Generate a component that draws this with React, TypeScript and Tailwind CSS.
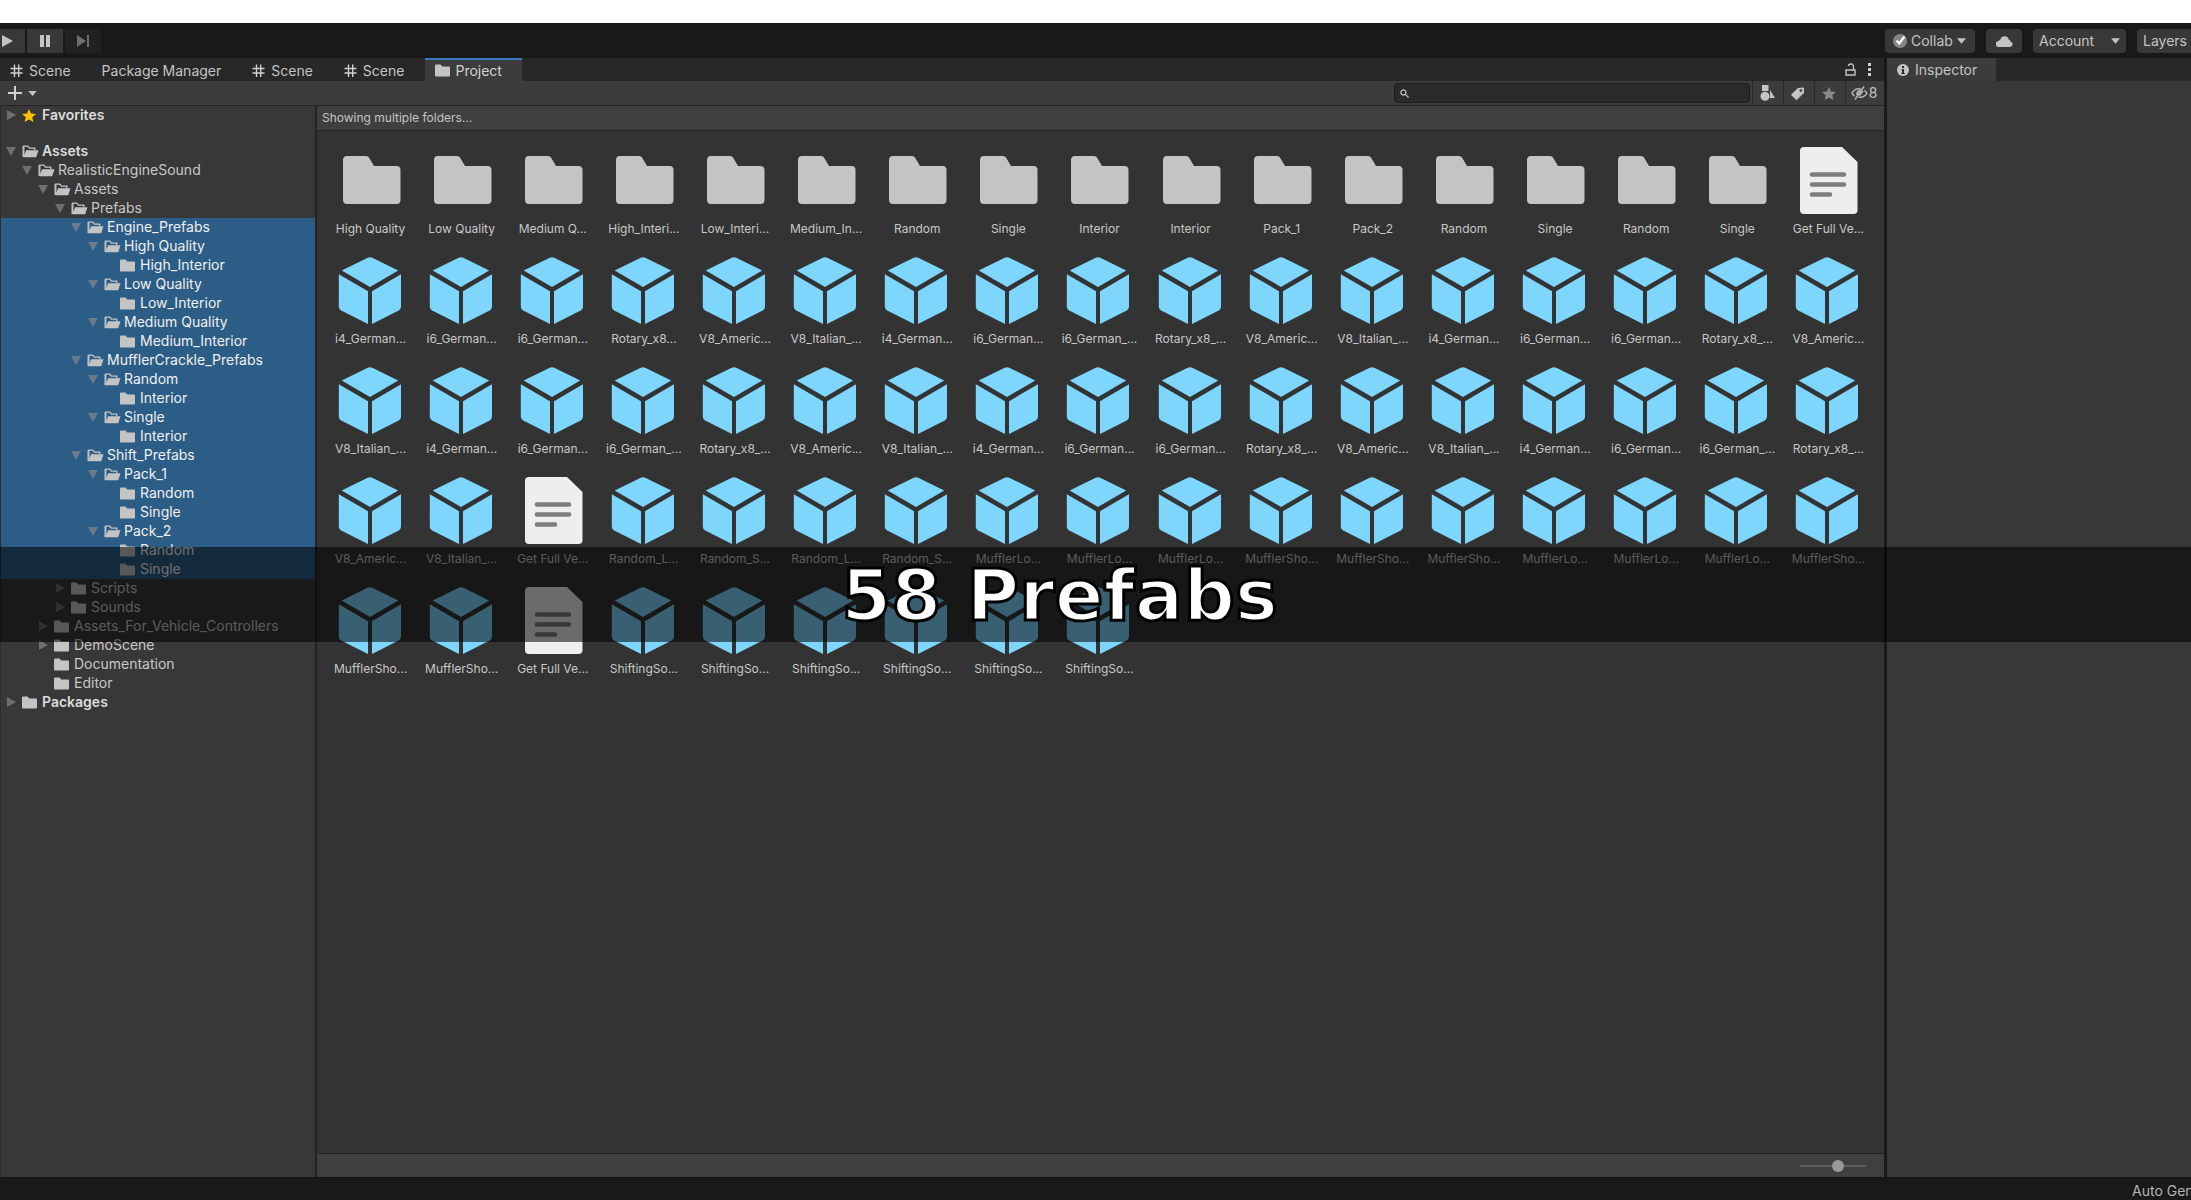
import React from "react";

type Kind = "folder" | "cube" | "file";
type Asset = { name: string; kind: Kind };
type Node = { name: string; level: number; state: "open" | "closed" | "leaf"; selected?: boolean };

const G4 = "i4_German...";
const G6 = "i6_German...";
const G6U = "i6_German_...";
const ROT = "Rotary_x8_...";
const AM = "V8_Americ...";
const IT = "V8_Italian_...";
const ML = "MufflerLo...";
const MS = "MufflerSho...";
const SS = "ShiftingSo...";
const RL = "Random_L...";
const RS = "Random_S...";

const of = (kind: Kind, names: string[]): Asset[] => names.map((name) => ({ name, kind }));
const readme: Asset = { name: "Get Full Ve...", kind: "file" };

const assets: Asset[] = [
  ...of("folder", [
    "High Quality", "Low Quality", "Medium Q...", "High_Interi...", "Low_Interi...", "Medium_In...",
    "Random", "Single", "Interior", "Interior", "Pack_1", "Pack_2", "Random", "Single", "Random", "Single",
  ]),
  readme,
  ...of("cube", [G4, G6, G6, "Rotary_x8...", AM, IT, G4, G6, G6U, ROT, AM, IT, G4, G6, G6, ROT, AM]),
  ...of("cube", [IT, G4, G6, G6U, ROT, AM, IT, G4, G6, G6, ROT, AM, IT, G4, G6, G6U, ROT]),
  ...of("cube", [AM, IT]),
  readme,
  ...of("cube", [RL, RS, RL, RS, ML, ML, ML, MS, MS, MS, ML, ML, ML, MS]),
  ...of("cube", [MS, MS]),
  readme,
  ...of("cube", [SS, SS, SS, SS, SS, SS]),
];

const open = (level: number, name: string, selected = false): Node => ({ name, level, state: "open", selected });
const closed = (level: number, name: string): Node => ({ name, level, state: "closed" });
const leaf = (level: number, name: string, selected = false): Node => ({ name, level, state: "leaf", selected });

const tree: Node[] = [
  open(0, "Assets"),
  open(1, "RealisticEngineSound"),
  open(2, "Assets"),
  open(3, "Prefabs"),
  open(4, "Engine_Prefabs", true),
  open(5, "High Quality", true),
  leaf(6, "High_Interior", true),
  open(5, "Low Quality", true),
  leaf(6, "Low_Interior", true),
  open(5, "Medium Quality", true),
  leaf(6, "Medium_Interior", true),
  open(4, "MufflerCrackle_Prefabs", true),
  open(5, "Random", true),
  leaf(6, "Interior", true),
  open(5, "Single", true),
  leaf(6, "Interior", true),
  open(4, "Shift_Prefabs", true),
  open(5, "Pack_1", true),
  leaf(6, "Random", true),
  leaf(6, "Single", true),
  open(5, "Pack_2", true),
  leaf(6, "Random", true),
  leaf(6, "Single", true),
  closed(3, "Scripts"),
  closed(3, "Sounds"),
  closed(2, "Assets_For_Vehicle_Controllers"),
  closed(2, "DemoScene"),
  leaf(2, "Documentation"),
  leaf(2, "Editor"),
  closed(0, "Packages"),
];

const indents = ["pl-[4px]", "pl-[20px]", "pl-[36px]", "pl-[53px]", "pl-[69px]", "pl-[86px]", "pl-[102px]"];

function Caret({ className }: { className?: string }) {
  return (
    <svg viewBox="0 0 10 6" className={className ?? "h-[6px] w-[10px]"} fill="#c4c4c4" aria-hidden="true">
      <path d="M0 0h10L5 6z" />
    </svg>
  );
}

function Foldout({ state }: { state: Node["state"] }) {
  return (
    <svg viewBox="0 0 12 12" className="h-3 w-3 shrink-0" fill="#8c8c8c" fillOpacity="0.65" aria-hidden="true">
      {state === "open" && <path d="M1 2h10L6 11z" />}
      {state === "closed" && <path d="M2 1v10l9-5z" />}
    </svg>
  );
}

function SmallFolder() {
  return (
    <svg viewBox="0 0 15 13" className="h-[13px] w-[15px] shrink-0" fill="#c4c4c4" aria-hidden="true">
      <path d="M0 1.500Q0 .5 1 .5h4.500l1.800 2H14q1 0 1 1v8q0 1-1 1H1q-1 0-1-1z" />
    </svg>
  );
}

function OpenFolder() {
  return (
    <svg viewBox="0 0 17 13" className="h-[13px] w-[17px] shrink-0" aria-hidden="true">
      <path d="M1.800 12V1.200h4l1.600 2h5.400v2" fill="none" stroke="#c4c4c4" strokeWidth="1.300" />
      <path d="M1.200 12.300 4.200 5.300h12.300l-2.300 7z" fill="#c4c4c4" />
      <path d="M1.100 1v11" stroke="#c4c4c4" strokeWidth="1.200" />
    </svg>
  );
}

function AssetIcon({ kind }: { kind: Kind }) {
  if (kind === "folder") {
    return (
      <svg viewBox="0 0 66 70" className="h-[70px] w-[66px]" fill="#c4c4c4" aria-hidden="true">
        <path d="M5 16q0-4 4-4h19q2 0 3 1.600l5 8.400h22.500q4 0 4 4v30q0 4-4 4H9q-4 0-4-4z" />
      </svg>
    );
  }
  if (kind === "cube") {
    return (
      <svg viewBox="0 0 66 70" className="h-[70px] w-[66px]" fill="#7ed6fd" aria-hidden="true">
        <path d="M29.700 3.800q2.300-1.300 4.600 0L60.200 16.500 32 33 3.700 16.500z" />
        <path d="M.8 20.200 30 37.200V70L3.200 56.500Q.8 55.200.8 52.500z" />
        <path d="M63 20.200 34 37.200V70l26.700-13.500q2.300-1.300 2.300-4z" />
      </svg>
    );
  }
  return (
    <svg viewBox="0 0 66 70" className="h-[70px] w-[66px]" aria-hidden="true">
      <path d="M5 7q0-4 4-4h38l15.500 15v48q0 4-4 4H9q-4 0-4-4z" fill="#eeeeee" />
      <path d="M17 30.500h32M17 40.500h32M17 50.500h18" stroke="#7d7d7d" strokeWidth="4.600" strokeLinecap="round" />
    </svg>
  );
}

function GridIcon() {
  return (
    <svg viewBox="0 0 13 14" className="h-[14px] w-[13px] shrink-0" fill="none" stroke="#d0d0d0" strokeWidth="1.400" aria-hidden="true">
      <path d="M4.500 .5v12.500M8.700 .5v12.500M.5 4.500h12M.5 9h12" />
    </svg>
  );
}

function Tab({ label, icon, active }: { label: string; icon?: React.ReactNode; active?: boolean }) {
  return (
    <button
      role="tab"
      aria-selected={!!active}
      className={
        active
          ? "flex h-full items-center gap-[5px] border-t-2 border-[#3a79bb] bg-[#3c3c3c] pr-[20px] pl-[10px] text-[#d2d2d2]"
          : "flex h-full items-center gap-[6px] border-t-2 border-transparent pr-[21px] pl-[10px] text-[#c4c4c4]"
      }
    >
      {icon}
      {label}
    </button>
  );
}

function TopBar() {
  return (
    <header className="flex h-[35px] shrink-0 items-start bg-[#191919] pt-[6px] text-sm text-[#c4c4c4]">
      <div className="flex gap-[2px]">
        <button aria-label="Play" className="flex h-6 w-[25px] items-center bg-[#383838] pl-[2px]">
          <svg viewBox="0 0 11 12" className="h-3 w-[11px]" fill="#c4c4c4"><path d="M0 0v12l11-6z" /></svg>
        </button>
        <button aria-label="Pause" className="flex h-6 w-9 items-center justify-center bg-[#383838]">
          <svg viewBox="0 0 10 12" className="h-3 w-[10px]" fill="#c4c4c4"><path d="M0 0h4v12H0zM6 0h4v12H6z" /></svg>
        </button>
        <button aria-label="Step" className="flex h-6 w-9 items-center justify-center bg-[#212121]">
          <svg viewBox="0 0 12 12" className="h-3 w-3" fill="#6e6e6e"><path d="M0 0v12l9-6zM10 0h2v12h-2z" /></svg>
        </button>
      </div>
      <div className="ml-auto flex gap-[11px]">
        <button className="flex h-6 w-[90px] items-center gap-1 rounded-sm bg-[#383838] pl-[8px]">
          <svg viewBox="0 0 14 14" className="h-[14px] w-[14px] shrink-0" aria-hidden="true">
            <circle cx="7" cy="7" r="7" fill="#858585" />
            <path d="m3.500 6.500 2.700 3L11.500 2.500" fill="none" stroke="#fff" strokeWidth="2.200" />
          </svg>
          Collab
          <Caret className="h-[6px] w-[9px] shrink-0" />
        </button>
        <button aria-label="Cloud" className="flex h-6 w-9 items-center justify-center rounded-sm bg-[#383838]">
          <svg viewBox="0 0 17 12" className="h-3 w-[17px]" fill="#c4c4c4">
            <path d="M3 12a3 3 0 0 1-.4-6Q3.200 5 4.500 4.500a4.200 4.200 0 0 1 8.200 0 2.500 2.500 0 0 1 1.800 2A2.800 2.800 0 0 1 14 12z" />
          </svg>
        </button>
        <button className="flex h-6 w-[93px] items-center justify-between rounded-sm bg-[#383838] px-[6px]">
          Account
          <Caret className="h-[6px] w-[9px] shrink-0" />
        </button>
        <button className="flex h-6 w-[54px] items-center overflow-hidden rounded-l-sm bg-[#383838] pl-[6px]">Layers</button>
      </div>
    </header>
  );
}

function SearchBar() {
  return (
    <div className="flex h-6 shrink-0 items-center bg-[#3c3c3c] text-[#c4c4c4]">
      <button aria-label="Create" className="flex items-center gap-[6px] pl-2">
        <svg viewBox="0 0 14 14" className="h-[14px] w-[14px]" stroke="#d0d0d0" strokeWidth="2"><path d="M7 0v14M0 7h14" /></svg>
        <Caret className="h-[5px] w-[9px]" />
      </button>
      <div className="ml-auto flex h-full items-center">
        <label className="mr-[2px] flex h-[20px] w-[356px] items-center gap-2 rounded border border-[#1c1c1c] bg-[#2a2a2a] pl-[5px]">
          <svg viewBox="0 0 10 10" className="h-[9px] w-[9px]" fill="none" stroke="#c4c4c4" strokeWidth="1.400">
            <circle cx="3.800" cy="3.800" r="2.800" />
            <path d="m6 6 3.500 3.500" />
          </svg>
          <input aria-label="Search assets" className="min-w-0 flex-1 bg-transparent text-sm outline-none" />
        </label>
        <button aria-label="Search by type" className="flex h-full w-[31px] items-center justify-center border-l border-[#2a2a2a] pr-[2px]">
          <svg viewBox="0 0 15 16" className="h-4 w-[15px]" fill="#c4c4c4">
            <path d="M2 0h6.500v6H2zM10 5l5 8h-5z" />
            <circle cx="5" cy="11.300" r="4.500" />
          </svg>
        </button>
        <button aria-label="Search by label" className="flex h-full w-[31px] items-center justify-center border-l border-[#2a2a2a] pr-[3px]">
          <svg viewBox="0 0 13 13" className="h-[13px] w-[13px]">
            <path d="M7 1 12 .5q1 0 1 1V6L6.200 12.600q-.8.700-1.500 0L.6 8.500q-.8-.8 0-1.600z" fill="#c4c4c4" />
            <circle cx="9.800" cy="3.600" r="1.300" fill="#3c3c3c" />
          </svg>
        </button>
        <button aria-label="Save search" className="flex h-full w-[31px] items-center justify-center border-l border-[#2a2a2a] pr-[2px]">
          <svg viewBox="0 0 14 13" className="h-[13px] w-[14px]" fill="#8a8a8a">
            <path d="m7 0 2 4.600 5 .4-3.800 3.200 1.200 4.800L7 10.400 2.600 13l1.200-4.800L0 5l5-.4z" />
          </svg>
        </button>
        <button aria-label="Hidden packages: 8" className="flex h-full w-[39px] items-center justify-center gap-px border-l border-[#2a2a2a] pr-[2px] text-sm">
          <svg viewBox="0 0 17 14" className="h-[14px] w-[17px]" fill="none" stroke="#b4b4b4" strokeWidth="1.500">
            <path d="M9.800 3C5.500 2.200 2.500 4.500 1 7.200q1 1.800 2.500 2.900M13.300 4.300q1.700 1.100 2.700 2.900c-1.800 3-5 4.600-8.500 3.900M13 .5 4 13.500" />
            <path d="M9.500 4.500Q6 5 6 9M8.300 9.500 12 5" strokeWidth="1.800" />
          </svg>
          8
        </button>
      </div>
    </div>
  );
}

function TreeRow({ node }: { node: Node }) {
  const bold = node.level === 0;
  return (
    <li
      role="treeitem"
      aria-level={node.level + 1}
      aria-selected={!!node.selected}
      className={node.selected ? "bg-[#2c5d87] text-[#f0f0f0]" : "text-[#c8c8c8]"}
    >
      <button className={`flex h-[19px] w-full items-center pb-px text-left whitespace-nowrap ${indents[node.level]}`}>
        <Foldout state={node.state} />
        <span className="ml-[5px] flex w-5 shrink-0 items-center">
          {node.state === "open" ? <OpenFolder /> : <SmallFolder />}
        </span>
        <span className={bold ? "font-semibold text-[#dcdcdc]" : ""}>{node.name}</span>
      </button>
    </li>
  );
}

function Sidebar() {
  return (
    <nav aria-label="Project folders" className="w-[315px] shrink-0 overflow-hidden border-l border-[#2c2c2c] bg-[#383838] text-sm">
      <button className="mb-[18px] flex h-[18px] w-full items-center pl-[4px] font-semibold text-[#dcdcdc]">
        <Foldout state="closed" />
        <svg viewBox="0 0 14 13" className="mr-[6px] ml-[5px] h-[13px] w-[14px]" fill="#ffc107" aria-hidden="true">
          <path d="m7 0 2 4.600 5 .4-3.800 3.200 1.200 4.800L7 10.400 2.600 13l1.200-4.800L0 5l5-.4z" />
        </svg>
        Favorites
      </button>
      <ul role="tree" aria-label="Assets">
        {tree.map((node, i) => (
          <TreeRow key={i} node={node} />
        ))}
      </ul>
    </nav>
  );
}

function AssetGrid() {
  return (
    <main className="flex min-w-0 flex-1 flex-col border-l-2 border-[#232323] bg-[#333333]">
      <div className="flex h-[25px] shrink-0 items-center border-b border-[#272727] bg-[#3f3f3f] pl-[5px] text-xs text-[#c4c4c4]">
        Showing multiple folders...
      </div>
      <ul className="grid flex-1 grid-cols-17 content-start gap-y-[19px] pt-[13px] pr-[10px] pl-[8px]">
        {assets.map((asset, i) => (
          <li key={i} className="min-w-0">
            <button className="flex w-full flex-col items-center gap-[9px]">
              <AssetIcon kind={asset.kind} />
              <span className="text-xs leading-3 whitespace-nowrap text-[#c8c8c8]">{asset.name}</span>
            </button>
          </li>
        ))}
      </ul>
      <div className="flex h-6 shrink-0 items-center justify-end border-t border-[#232323] bg-[#3f3f3f] pr-[18px]">
        <input
          type="range"
          aria-label="Icon size"
          defaultValue={60}
          className="h-3 w-[66px] appearance-none bg-transparent [&::-webkit-slider-runnable-track]:h-[2px] [&::-webkit-slider-runnable-track]:bg-[#5e5e5e] [&::-webkit-slider-thumb]:-mt-[5px] [&::-webkit-slider-thumb]:h-3 [&::-webkit-slider-thumb]:w-3 [&::-webkit-slider-thumb]:appearance-none [&::-webkit-slider-thumb]:rounded-full [&::-webkit-slider-thumb]:bg-[#999999]"
        />
      </div>
    </main>
  );
}

export default function App() {
  return (
    <div className="relative flex h-screen flex-col overflow-hidden bg-[#191919] pt-[23px] font-['Inter',sans-serif] before:absolute before:inset-x-0 before:top-0 before:h-[23px] before:bg-white">
      <TopBar />
      <div className="flex min-h-0 flex-1">
        <section aria-label="Project" className="flex min-w-0 flex-1 flex-col">
          <div className="flex h-[23px] shrink-0 items-center bg-[#282828] text-sm">
            <div role="tablist" className="flex h-full">
              <Tab label="Scene" icon={<GridIcon />} />
              <Tab label="Package Manager" />
              <Tab label="Scene" icon={<GridIcon />} />
              <Tab label="Scene" icon={<GridIcon />} />
              <Tab label="Project" icon={<SmallFolder />} active />
            </div>
            <div className="ml-auto flex items-center gap-3 pr-[13px]">
              <button aria-label="Lock">
                <svg viewBox="0 0 11 13" className="h-[13px] w-[11px]" fill="none" stroke="#c4c4c4" strokeWidth="1.400">
                  <path d="M1 7h9v5H1zM8.500 7V3.500Q8.500 1 6 1T3.500 3" />
                </svg>
              </button>
              <button aria-label="More">
                <svg viewBox="0 0 3 13" className="h-[13px] w-[3px]" fill="#d0d0d0">
                  <path d="M0 0h3v3H0zM0 5h3v3H0zM0 10h3v3H0z" />
                </svg>
              </button>
            </div>
          </div>
          <SearchBar />
          <div className="flex min-h-0 flex-1 border-t border-[#232323]">
            <Sidebar />
            <AssetGrid />
          </div>
        </section>
        <aside aria-label="Inspector" className="flex w-[307px] shrink-0 flex-col border-l-3 border-[#191919] bg-[#383838]">
          <div className="flex h-[23px] bg-[#282828]">
            <div className="flex items-center gap-[6px] bg-[#3c3c3c] pt-px pr-[19px] pl-[10px] text-sm text-[#c4c4c4]">
              <svg viewBox="0 0 12 12" className="h-3 w-3" aria-hidden="true">
                <circle cx="6" cy="6" r="6" fill="#c4c4c4" />
                <path d="M5 2h2v2H5zM4.500 5H7v4h.8v1H4.300V9H5V6h-.5z" fill="#2c2c2c" />
              </svg>
              Inspector
            </div>
          </div>
        </aside>
      </div>
      <footer className="flex h-[23px] shrink-0 items-center justify-end border-t border-[#121212] pt-1 text-sm text-[#b4b4b4]">
        <span className="w-[59px] overflow-hidden whitespace-nowrap">Auto Generate</span>
      </footer>
      <div className="pointer-events-none absolute inset-x-0 top-[547px] flex h-[95px] items-center justify-center bg-black/55 pr-[72px]">
        <h1 className="font-['DejaVu_Sans',sans-serif] text-7xl leading-none font-bold whitespace-nowrap text-white [-webkit-text-stroke:3px_black]">
          58 Prefabs
        </h1>
      </div>
    </div>
  );
}
